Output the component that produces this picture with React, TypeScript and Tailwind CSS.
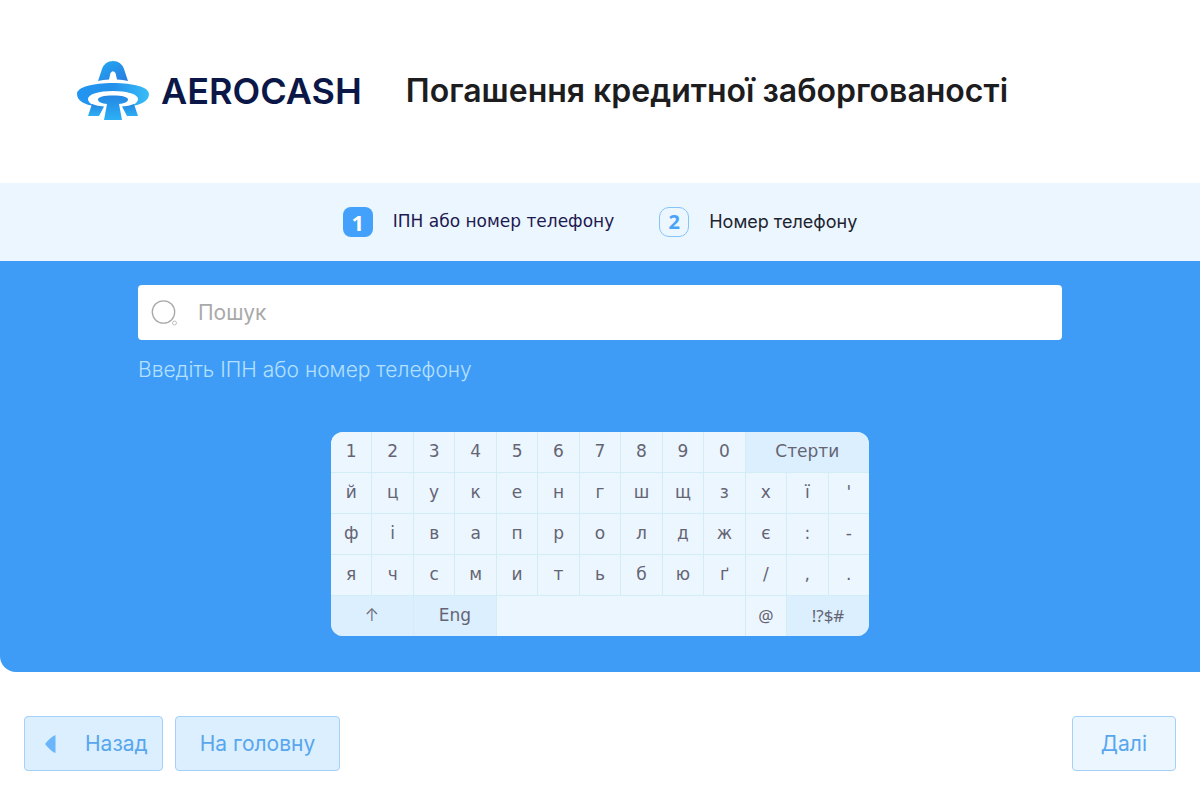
import { useState } from "react";
import clsx from "clsx";

type Key = { label: string; span?: string; accent?: boolean; name?: string; font?: string };

const NOTO = "font-['Noto_Sans',sans-serif]";

const letters = (row: string): Key[] => row.split("").map((label) => ({ label }));

const KEYS: Key[] = [
  ...letters("1234567890"),
  { label: "Стерти", span: "col-span-3", accent: true },
  ...letters("йцукенгшщзхї'"),
  ...letters("фівапролджє:-"),
  ...letters("ячсмитьбюґ/,."),
  { label: "↑", span: "col-span-2", accent: true, name: "Shift", font: "font-[Inter,sans-serif] font-light" },
  { label: "Eng", span: "col-span-2", accent: true },
  { label: " ", span: "col-span-6", name: "Пробіл" },
  { label: "@", font: NOTO },
  { label: "!?$#", span: "col-span-2", accent: true, font: NOTO },
];

function Logo() {
  return (
    <a href="#" className="flex items-center gap-3 text-[#0a1747]">
      <svg width="72" height="60" viewBox="0 0 72 60" aria-hidden="true">
        <defs>
          <linearGradient id="aero" x1="0" y1="0" x2="1" y2="0">
            <stop offset="0" stopColor="#2196f3" />
            <stop offset="0.5" stopColor="#2490ea" />
            <stop offset="1" stopColor="#38bdf8" />
          </linearGradient>
          <linearGradient id="aeroTop" x1="0" y1="0" x2="1" y2="1">
            <stop offset="0" stopColor="#22aaf2" />
            <stop offset="1" stopColor="#2a7be0" />
          </linearGradient>
          <linearGradient id="aeroBeam" x1="0" y1="0" x2="0" y2="1">
            <stop offset="0" stopColor="#2486e2" />
            <stop offset="1" stopColor="#2db0f5" />
          </linearGradient>
        </defs>
        <path
          fill="url(#aeroTop)"
          d="M21 20 L25 8 Q28 0 36 0 Q44 0 47 8 L51 20 Q46 18.500 40 18.500 L38.500 12 Q36 8.500 33.500 12 L32 18.500 Q26 18.500 21 20Z"
        />
        <path
          fill="url(#aero)"
          fillRule="evenodd"
          d="M36 22 C56 22 72 26 72 33 C72 40 64 44 54 45 C58 43 61 41 61 38 C61 33 50 30 36 30 C22 30 11 33 11 38 C11 41 14 43 18 45 C8 44 0 40 0 33 C0 26 16 22 36 22Z"
        />
        <path
          fill="url(#aeroBeam)"
          d="M36 34.500 C45 34.500 51 36 51 38.500 C51 41 47 42.500 42 43 L45 59 H27 L30 43 C25 42.500 21 41 21 38.500 C21 36 27 34.500 36 34.500Z"
        />
        <path fill="url(#aeroBeam)" d="M15 43 Q20 45 27 45.500 L22 55 H11Z" />
        <path fill="url(#aeroBeam)" d="M45 45.500 Q52 45 57 43 L61 55 H50Z" />
      </svg>
      <span className="text-[36px] font-semibold leading-none">AEROCASH</span>
    </a>
  );
}

function Keyboard({ onKey }: { onKey: (key: Key) => void }) {
  return (
    <div className="mx-auto grid h-[204px] w-full max-w-[538px] grid-cols-13 grid-rows-5 gap-px overflow-hidden rounded-xl bg-[#d3edf6] text-[17px] text-[#646473]">
      {KEYS.map((key, i) => (
        <button
          key={i}
          type="button"
          aria-label={key.name}
          onClick={() => onKey(key)}
          className={clsx(
            key.span,
            key.accent ? "bg-[#dceffe]" : "bg-[#ecf6ff]",
            key.font ?? "font-['DejaVu_Sans',sans-serif]",
          )}
        >
          {key.label}
        </button>
      ))}
    </div>
  );
}

export default function App() {
  const [value, setValue] = useState("");

  const press = (key: Key) => {
    if (key.label === "Стерти") setValue((v) => v.slice(0, -1));
    else if (!key.accent) setValue((v) => v + key.label);
  };

  return (
    <div className="bg-white font-[Inter,sans-serif]">
      <header className="flex items-center gap-11 px-[77px] pt-[61px] pb-[62px]">
        <Logo />
        <h1 className="text-[32px] leading-[60px] font-semibold text-[#1d1d1f]">Погашення кредитної заборгованості</h1>
      </header>

      <ol className="flex items-center justify-center gap-[45px] bg-[#ecf6ff] py-6">
        <li className="flex items-center gap-5">
          <span className="flex size-[30px] items-center justify-center rounded-lg bg-[#43a0fb] font-['Noto_Sans',sans-serif] text-[22px] font-bold text-white">
            1
          </span>
          <span className="font-['DejaVu_Sans',sans-serif] text-[17px] text-[#1c1a50]">ІПН або номер телефону</span>
        </li>
        <li className="flex items-center gap-5">
          <span className="flex size-[30px] items-center justify-center rounded-[10px] border border-[#86c3fb] font-['Noto_Sans',sans-serif] text-xl font-bold text-[#48a3fa]">
            2
          </span>
          <span className="text-lg text-[#1d2430]">Номер телефону</span>
        </li>
      </ol>

      <main className="rounded-bl-2xl bg-[#3e9cf7] pt-6 pb-9">
        <div className="mx-auto mb-12 w-[77%]">
          <div className="flex h-[55px] items-center gap-5 rounded-sm bg-white px-3">
            <svg width="28" height="28" viewBox="0 0 28 28" fill="none" stroke="#a9a9a9" aria-hidden="true">
              <circle cx="13.500" cy="13" r="11.200" strokeWidth="1.300" />
              <circle cx="24.500" cy="24" r="2" strokeWidth="0.700" />
            </svg>
            <input
              id="search"
              type="text"
              value={value}
              onChange={(e) => setValue(e.target.value)}
              placeholder="Пошук"
              className="min-w-0 flex-1 text-[21px] text-[#333] outline-none placeholder:text-[#a9a9a9]"
            />
          </div>
          <label htmlFor="search" className="mt-4 block text-[21px] leading-7 font-light text-[#b5e0ff]">
            Введіть ІПН або номер телефону
          </label>
        </div>
        <Keyboard onKey={press} />
      </main>

      <footer className="flex gap-3 px-6 pt-11 pb-5 text-[21px] text-[#58a6ee]">
        <button type="button" className="flex h-[55px] items-center gap-7 rounded-sm border border-[#a5d0f8] bg-[#dceffe] pr-[14px] pl-5">
          <svg width="12" height="18" viewBox="0 0 12 18" aria-hidden="true">
            <path fill="#6bb5fb" d="M10.500 0 V18 Q7 17 0.700 10 Q0 9 0.700 8 Q7 1 10.500 0Z" />
          </svg>
          Назад
        </button>
        <button type="button" className="h-[55px] rounded-sm border border-[#a5d0f8] bg-[#dceffe] px-6">
          На головну
        </button>
        <button type="button" className="ml-auto h-[55px] rounded-sm border border-[#a5d0f8] bg-[#ecf6ff] px-7">
          Далі
        </button>
      </footer>
    </div>
  );
}
